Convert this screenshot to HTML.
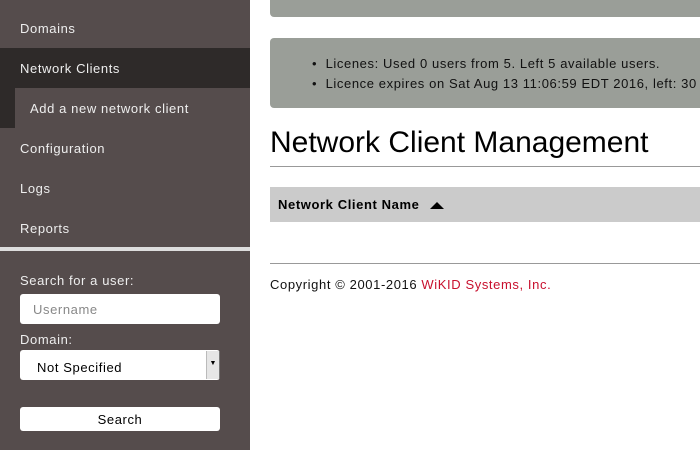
<!DOCTYPE html>
<html><head><style>
body{margin:0;width:700px;height:450px;overflow:hidden;font-family:"Liberation Sans",sans-serif;letter-spacing:0.6px;background:#fff;position:relative}
.sb{position:absolute;left:0;top:0;width:250px;height:450px;background:#554c4c;color:#eee;font-size:13px}
.it{position:absolute;left:20px}
.ab{position:absolute}
</style></head><body>
<div class="sb">
<div class="it" style="top:21px">Domains</div>
<div class="ab" style="left:0;top:48px;width:250px;height:40px;background:#2e2a29"></div>
<div class="ab" style="left:0;top:88px;width:15px;height:40px;background:#2e2a29"></div>
<div class="it" style="top:61px">Network Clients</div>
<div class="it" style="top:101px;left:30px">Add a new network client</div>
<div class="it" style="top:141px">Configuration</div>
<div class="it" style="top:181px">Logs</div>
<div class="it" style="top:221px">Reports</div>
<div class="ab" style="left:0;top:247px;width:250px;height:4px;background:#ddd"></div>
<div class="it" style="top:273px">Search for a user:</div>
<div class="ab" style="left:20px;top:294px;width:200px;height:30px;background:#fff;border-radius:3px;color:#888;box-sizing:border-box;padding:8px 13px">Username</div>
<div class="it" style="top:332px">Domain:</div>
<div class="ab" style="left:20px;top:350px;width:200px;height:30px;background:#fff;border-radius:3px;color:#000;box-sizing:border-box;padding:10px 17px">Not Specified</div>
<div class="ab" style="left:206px;top:351px;width:12px;height:28px;background:#e6e6e6;border-left:1px solid #bbb;border-right:1px solid #777;font-size:7px;letter-spacing:0;color:#000;text-align:center;line-height:26px">▼</div>
<div class="ab" style="left:20px;top:407px;width:200px;height:24px;background:#fff;border-radius:3px;color:#000;text-align:center;line-height:25px">Search</div>
</div>
<div class="ab" style="left:270px;top:-10px;width:440px;height:27px;background:#9a9e98;border-radius:4px"></div>
<div class="ab" style="left:270px;top:38px;width:440px;height:70px;background:#9a9e98;border-radius:4px;font-size:13px;color:#111">
<div class="ab" style="left:42px;top:18px;white-space:nowrap">• &nbsp;Licenes: Used 0 users from 5. Left 5 available users.</div>
<div class="ab" style="left:42px;top:38px;white-space:nowrap">• &nbsp;Licence expires on Sat Aug 13 11:06:59 EDT 2016, left: 30</div>
</div>
<div class="ab" style="left:270px;top:126px;letter-spacing:0;font-size:30px;color:#000;white-space:nowrap">Network Client Management</div>
<div class="ab" style="left:270px;top:166px;width:430px;height:1px;background:#999"></div>
<div class="ab" style="left:270px;top:187px;width:430px;height:35px;background:#cbcbcb;font-size:13px;font-weight:bold;line-height:36px;padding-left:8px;box-sizing:border-box">Network Client Name</div>
<svg class="ab" style="left:429px;top:200px" width="16" height="10"><path d="M1 9 L8 2 L15 9 Z" fill="#000"/></svg>
<div class="ab" style="left:270px;top:263px;width:430px;height:1px;background:#999"></div>
<div class="ab" style="left:270px;top:277px;font-size:13px;color:#111;white-space:nowrap">Copyright © 2001-2016 <span style="color:#c8102e">WiKID Systems, Inc.</span></div>
</body></html>
